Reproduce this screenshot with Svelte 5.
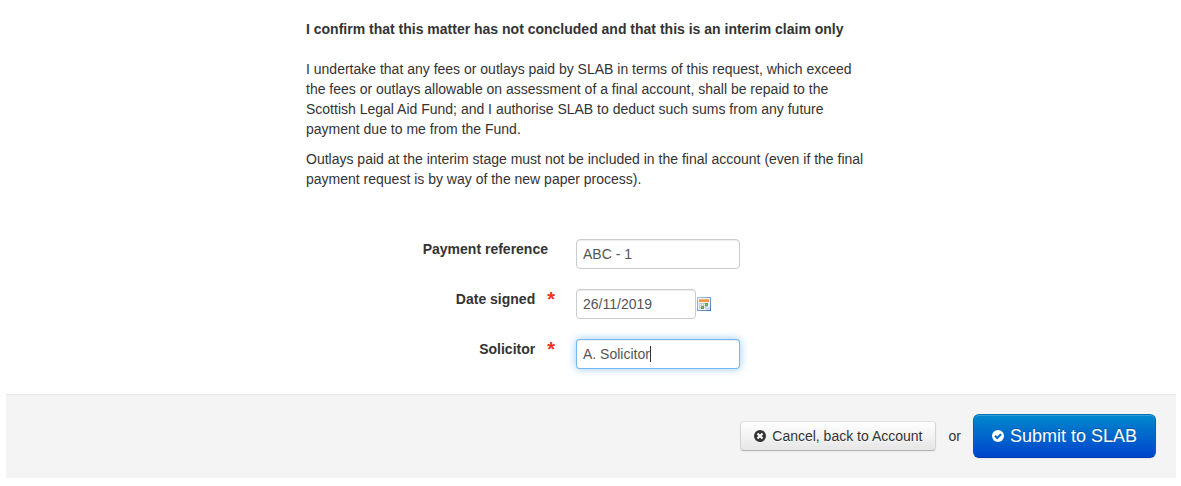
<script lang="ts">
  // Interim claim declaration: confirmation text, signing fields and submit bar.
  let paymentReference = $state('ABC - 1');
  let dateSigned = $state('26/11/2019');
  let solicitor = $state('A. Solicitor');
  let caretOffset = $state(0);
  let solicitorFocused = $state(false);

  // Start in the last field with the cursor after its text.
  function focusEnd(node: HTMLInputElement) {
    node.focus();
    node.setSelectionRange(node.value.length, node.value.length);
    solicitorFocused = true;
    placeCaret(node);
  }

  // Width of the text in front of the cursor, for the drawn caret.
  function placeCaret(node: HTMLInputElement) {
    const ctx = document.createElement('canvas').getContext('2d')!;
    ctx.font = '14px "Liberation Sans", Arial, sans-serif';
    const before = node.value.slice(0, node.selectionStart ?? node.value.length);
    caretOffset = Math.round(ctx.measureText(before).width);
  }
</script>

<form class="claim" onsubmit={(e) => e.preventDefault()}>
  <div class="declaration">
    <h4>I confirm that this matter has not concluded and that this is an interim claim only</h4>
    <p>
      I undertake that any fees or outlays paid by SLAB in terms of this request, which exceed the
      fees or outlays allowable on assessment of a final account, shall be repaid to the Scottish
      Legal Aid Fund; and I authorise SLAB to deduct such sums from any future payment due to me
      from the Fund.
    </p>
    <p>
      Outlays paid at the interim stage must not be included in the final account (even if the
      final payment request is by way of the new paper process).
    </p>

    <div class="fields">
      <div class="control-group">
        <label for="payment-ref">Payment reference</label>
        <input id="payment-ref" type="text" bind:value={paymentReference} />
      </div>

      <div class="control-group">
        <label class="required" for="date-signed">Date signed <span class="star">*</span></label>
        <div class="date">
          <input id="date-signed" type="text" required bind:value={dateSigned} />
          <button class="picker" type="button" aria-label="Choose date">
            <svg width="14" height="14" viewBox="0 0 14 14" shape-rendering="crispEdges">
              <defs>
                <linearGradient id="frame" x1="0" y1="0" x2="1" y2="1">
                  <stop offset="0" stop-color="#a9c8ef" />
                  <stop offset="1" stop-color="#3f76bd" />
                </linearGradient>
              </defs>
              <rect width="14" height="14" fill="url(#frame)" />
              <rect x="1" y="1" width="12" height="12" fill="#edf4fc" />
              <rect x="2" y="2" width="10" height="3" fill="#f79646" />
              <rect x="2" y="2" width="10" height="1" fill="#fbb06c" />
              <rect x="2" y="6" width="9" height="6" fill="#c3ced8" />
              <path
                fill="#fff"
                d="M3 7h1v1H3zM5 7h1v1H5zM7 7h1v1H7zM3 9h1v1H3zM7 9h1v1H7zM3 11h1v1H3zM7 11h1v1H7z"
              />
              <path fill="#5aa653" d="M8 6h3v3H8zM4 9h3v3H4z" />
              <path fill="#7cbf73" d="M9 7h1v1H9zM5 10h1v1H5z" />
              <path fill="#c9dcf2" d="M9 13v-3h4v3z" />
            </svg>
          </button>
        </div>
      </div>

      <div class="control-group">
        <label class="required" for="solicitor">Solicitor <span class="star">*</span></label>
        <div class="caret-field">
          <input
            id="solicitor"
            type="text"
            required
            bind:value={solicitor}
            use:focusEnd
            onfocus={() => (solicitorFocused = true)}
            onblur={() => (solicitorFocused = false)}
            oninput={(e) => placeCaret(e.currentTarget)}
            onkeyup={(e) => placeCaret(e.currentTarget)}
            onclick={(e) => placeCaret(e.currentTarget)}
          />
          {#if solicitorFocused}
            <span class="caret" style="margin-left: {caretOffset}px"></span>
          {/if}
        </div>
      </div>
    </div>
  </div>

  <div class="form-actions">
    <button class="btn" type="button">
      <svg width="12" height="12" viewBox="0 0 12 12" aria-hidden="true">
        <circle cx="6" cy="6" r="6" fill="#333" />
        <path
          fill="#f8f8f8"
          d="M4.3 2.7 6 4.4l1.7-1.7 1.6 1.6L7.6 6l1.7 1.7-1.6 1.6L6 7.6 4.3 9.3 2.7 7.7 4.4 6 2.7 4.3z"
        />
      </svg>
      Cancel, back to Account
    </button>
    <span>or</span>
    <button class="btn btn-primary btn-large" type="submit">
      <svg width="12" height="12" viewBox="0 0 12 12" aria-hidden="true">
        <circle cx="6" cy="6" r="6" fill="#fff" />
        <path fill="none" stroke="#0064cc" stroke-width="2" d="M3 5.8 5.2 8 9.1 4.1" />
      </svg>
      Submit to SLAB
    </button>
  </div>
</form>

<style>
  :global(body) {
    margin: 0;
    background: #fff;
  }
  .claim {
    padding: 19px 5px 8px 6px;
    font-family: 'Liberation Sans', Arial, Helvetica, sans-serif;
    font-size: 14px;
    line-height: 20px;
    color: #333;
  }
  .declaration {
    max-width: 570px;
    margin: 0 auto;
  }
  h4 {
    margin: 0 0 20px;
    font-size: 14px;
    font-weight: bold;
    line-height: 20px;
  }
  p {
    margin: 0 0 10px;
    padding-right: 8px;
  }
  .fields {
    display: flex;
    flex-direction: column;
    gap: 20px;
    padding: 40px 0 25px;
  }
  .control-group {
    display: grid;
    grid-template-columns: 250px 1fr;
    column-gap: 20px;
    align-items: start;
    justify-items: start;
  }
  label {
    justify-self: end;
    padding-right: 8px;
    font-weight: bold;
  }
  label.required {
    display: flex;
    gap: 12px;
    padding-right: 1px;
  }
  .star {
    font-size: 20px;
    color: #ee3322;
  }
  input {
    box-sizing: border-box;
    width: 164px;
    height: 30px;
    padding: 4px 6px;
    border: 1px solid #ccc;
    border-radius: 4px;
    background: #fff;
    box-shadow: inset 0 1px 1px rgba(0, 0, 0, 0.075);
    font: inherit;
    color: #555;
  }
  input:focus {
    outline: 0;
    border-color: rgba(82, 168, 236, 0.8);
    box-shadow:
      inset 0 1px 1px rgba(0, 0, 0, 0.075),
      0 0 8px rgba(82, 168, 236, 0.6);
  }
  .date {
    display: flex;
    align-items: center;
    gap: 1px;
  }
  .date input {
    width: 120px;
  }
  .picker {
    display: flex;
    padding: 0;
    border: 0;
    background: none;
    cursor: pointer;
  }
  .caret-field {
    display: flex;
    position: relative;
  }
  .caret-field input {
    caret-color: transparent;
  }
  .caret {
    position: absolute;
    top: 7px;
    left: 7px;
    width: 1px;
    height: 16px;
    background: #333;
    pointer-events: none;
  }
  .form-actions {
    display: flex;
    align-items: center;
    justify-content: flex-end;
    gap: 12px;
    padding: 19px 20px 20px;
    border-top: 1px solid #e5e5e5;
    background: #f4f4f4;
  }
  .btn {
    display: inline-flex;
    align-items: center;
    gap: 6px;
    padding: 4px 13px;
    border: 1px solid #ccc;
    border-color: #e0e0e0 #d4d4d4 #b3b3b3;
    border-radius: 4px;
    background: linear-gradient(#fff, #e6e6e6);
    box-shadow:
      inset 0 1px 0 rgba(255, 255, 255, 0.2),
      0 1px 2px rgba(0, 0, 0, 0.05);
    font: inherit;
    color: #333;
    text-shadow: 0 1px 1px rgba(255, 255, 255, 0.75);
    cursor: pointer;
  }
  .btn-primary {
    border-color: #0077b3 #0060b8 #003aa8;
    background: linear-gradient(#0088cc, #0044cc);
    color: #fff;
    text-shadow: 0 -1px 0 rgba(0, 0, 0, 0.25);
  }
  .btn-large {
    padding: 11px 18px;
    border-radius: 6px;
    font-size: 18px;
  }
</style>
